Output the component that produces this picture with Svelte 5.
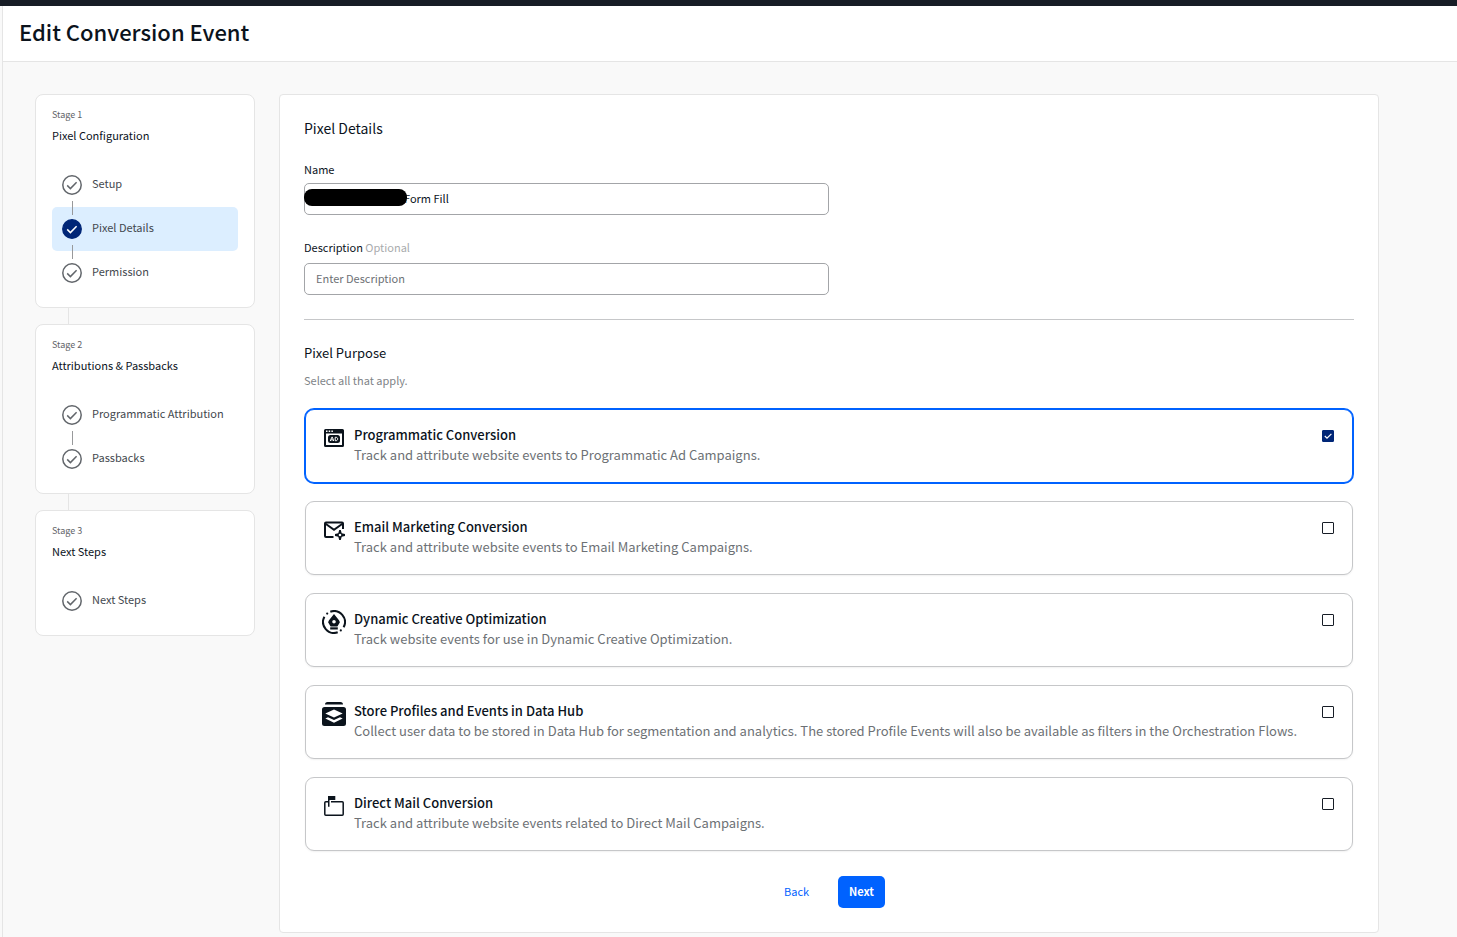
<script>
  const stages = [
    {
      label: 'Stage 1',
      title: 'Pixel Configuration',
      steps: ['Setup', 'Pixel Details', 'Permission']
    },
    {
      label: 'Stage 2',
      title: 'Attributions & Passbacks',
      steps: ['Programmatic Attribution', 'Passbacks']
    },
    {
      label: 'Stage 3',
      title: 'Next Steps',
      steps: ['Next Steps']
    }
  ];

  let currentStep = $state('Pixel Details');
  let name = $state('Form Fill');
  let description = $state('');

  let purposes = $state([
    {
      id: 'programmatic',
      title: 'Programmatic Conversion',
      text: 'Track and attribute website events to Programmatic Ad Campaigns.',
      checked: true
    },
    {
      id: 'email',
      title: 'Email Marketing Conversion',
      text: 'Track and attribute website events to Email Marketing Campaigns.',
      checked: false
    },
    {
      id: 'creative',
      title: 'Dynamic Creative Optimization',
      text: 'Track website events for use in Dynamic Creative Optimization.',
      checked: false
    },
    {
      id: 'datahub',
      title: 'Store Profiles and Events in Data Hub',
      text: 'Collect user data to be stored in Data Hub for segmentation and analytics. The stored Profile Events will also be available as filters in the Orchestration Flows.',
      checked: false
    },
    {
      id: 'mail',
      title: 'Direct Mail Conversion',
      text: 'Track and attribute website events related to Direct Mail Campaigns.',
      checked: false
    }
  ]);
</script>

<div class="app">
  <header class="page-header">
    <h1>Edit Conversion Event</h1>
  </header>

  <div class="layout">
    <!-- Stage navigation -->
    <nav class="stages" aria-label="Stages">
      {#each stages as stage}
        <section class="stage">
          <p class="stage-label">{stage.label}</p>
          <h2 class="stage-title">{stage.title}</h2>
          <ol class="steps">
            {#each stage.steps as step}
              <li>
                <button
                  type="button"
                  class="step"
                  class:active={step === currentStep}
                  onclick={() => (currentStep = step)}
                >
                  <svg class="step-icon" viewBox="0 0 20 20" width="20" height="20" aria-hidden="true">
                    <circle class="ring" cx="10" cy="10" r="9.2" />
                    <path class="tick" d="M5.2 10.4l3.200 3.200 6.200-6.400" />
                  </svg>
                  <span class="step-name">{step}</span>
                </button>
              </li>
            {/each}
          </ol>
        </section>
      {/each}
    </nav>

    <!-- Form -->
    <main class="panel">
      <h2 class="panel-title">Pixel Details</h2>

      <div class="field">
        <label for="pixel-name">Name</label>
        <div class="masked">
          <input id="pixel-name" class="masked-input" type="text" bind:value={name} />
          <span class="mask"></span>
        </div>
      </div>

      <div class="field">
        <label class="tall" for="pixel-description">Description <span class="optional">Optional</span></label>
        <input id="pixel-description" type="text" placeholder="Enter Description" bind:value={description} />
      </div>

      <hr />

      <h3 class="purpose-title">Pixel Purpose</h3>
      <p class="hint">Select all that apply.</p>

      <div class="purposes">
        {#each purposes as purpose}
          <label class="purpose" class:selected={purpose.checked}>
            <svg class="purpose-icon" viewBox="0 0 24 24" width="24" height="24" aria-hidden="true">
              {#if purpose.id === 'programmatic'}
                <path fill-rule="evenodd" d="M3.500 3h17A1.500 1.500 0 0 1 22 4.500v15a1.500 1.500 0 0 1-1.500 1.500h-17A1.500 1.500 0 0 1 2 19.500v-15A1.500 1.500 0 0 1 3.500 3zM4 7.500V19h16V7.500z" />
                <path class="light" d="M4 4.500h1.500v1.500H4zM6.700 4.500h1.500v1.500H6.700zM9.400 4.500h1.500v1.500H9.400z" />
                <rect x="6" y="9" width="12" height="8" rx="2.5" />
                <path class="light-line" d="M8.300 15l1.500-3.800h.6l1.300 3.800M9 13.900h2.200M13.200 11.300v3.400h.8c2.200 0 2.200-3.400 0-3.400z" />
              {:else if purpose.id === 'email'}
                <path class="line" d="M11.500 19H4a1 1 0 0 1-1-1V5.500a1 1 0 0 1 1-1h16a1 1 0 0 1 1 1V11" />
                <path class="line" d="M3.200 5.500l8.800 6.300 8.800-6.300" />
                <path fill-rule="evenodd" d="M17.200 12h1.600l.9 3.200 3.300.9v1.800l-3.300.9-.9 3.200h-1.600l-.9-3.200-3.300-.9v-1.800l3.300-.9zM18 15.700a1.300 1.300 0 1 0 0 2.600 1.300 1.300 0 0 0 0-2.600z" />
              {:else if purpose.id === 'creative'}
                <path class="line" d="M8.300 1.700A11 11 0 0 1 21.600 17.300M15.700 22.300A11 11 0 0 1 2.400 6.700" />
                <circle cx="5.200" cy="3.600" r="1.100" />
                <circle cx="18.800" cy="20.400" r="1.100" />
                <path fill-rule="evenodd" d="M12 4l5 6.300.9 2-2.500 4.200H8.600l-2.500-4.200.9-2zM12 10a1.800 1.800 0 1 0 0 3.600 1.800 1.800 0 0 0 0-3.600z" />
                <path d="M8.200 17.300h7.600v2.200H8.200z" />
              {:else if purpose.id === 'datahub'}
                <path d="M5.500 0h13a2.500 2.500 0 0 1 2.500 2.500H3A2.500 2.500 0 0 1 5.500 0z" />
                <path d="M2.500 5h19A2.500 2.500 0 0 1 24 7.500v14a2.500 2.500 0 0 1-2.500 2.500h-19A2.500 2.500 0 0 1 0 21.500v-14A2.500 2.500 0 0 1 2.500 5z" />
                <path class="light" d="M12 7.500l8.700 4-8.700 4-8.700-4zM3.300 16.500l2.700-1.200 6 2.800 6-2.800 2.700 1.200-8.700 4.200z" />
              {:else}
                <path class="thin-line" d="M6 7.800H3.800a1 1 0 0 0-1 1v11.400a1 1 0 0 0 1 1h16.400a1 1 0 0 0 1-1V8.800a1 1 0 0 0-1-1H9" />
                <path d="M6 2h7.300v4H7.500v6.800H6z" />
              {/if}
            </svg>
            <span class="purpose-body">
              <span class="purpose-name">{purpose.title}</span>
              <span class="purpose-text">{purpose.text}</span>
            </span>
            <span class="check">
              <input type="checkbox" bind:checked={purpose.checked} />
              {#if purpose.checked}
                <svg class="check-mark" viewBox="0 0 12 12" width="12" height="12" aria-hidden="true">
                  <path d="M2.800 6l2.200 2.200 4.400-4.400" />
                </svg>
              {/if}
            </span>
          </label>
        {/each}
      </div>

      <div class="actions">
        <button type="button" class="back">Back</button>
        <button type="button" class="next">Next</button>
      </div>
    </main>
  </div>
</div>

<style>
  :global(body) {
    margin: 0;
    background: #f9f9f9;
  }

  .app {
    box-sizing: border-box;
    min-height: 100vh;
    border-top: 6px solid #171d26;
    background: #f9f9f9;
    color: #0b131c;
    font-family: 'Source Sans Pro', 'Noto Sans CJK SC', sans-serif;
    font-size: 11px;
  }

  .app * {
    box-sizing: border-box;
  }

  h1, h2, h3, p, ol {
    margin: 0;
    padding: 0;
    font-weight: 400;
  }

  button, input {
    font: inherit;
    color: inherit;
  }

  .page-header {
    margin-left: 2px;
    padding: 9px 16px 14px;
    border-left: 1px solid #e5e5e5;
    border-bottom: 1px solid #e5e5e5;
    background: #fff;
  }

  h1 {
    font-size: 22px;
    line-height: 32px;
    font-weight: 500;
  }

  .layout {
    display: flex;
    align-items: flex-start;
    gap: 24px;
    margin-left: 2px;
    padding: 32px 32px 4px;
    border-left: 1px solid #e5e5e5;
  }

  /* Stages */
  .stages {
    display: flex;
    flex-direction: column;
    flex: 0 0 220px;
    gap: 16px;
  }

  .stage {
    position: relative;
    padding: 12px 16px;
    border: 1px solid #e5e5e5;
    border-radius: 8px;
    background: #fff;
  }

  .stage:not(:last-child)::after {
    content: '';
    position: absolute;
    top: 100%;
    left: 32px;
    width: 1px;
    height: 17px;
    background: #e5e5e5;
  }

  .stage-label {
    color: #5f6368;
    font-size: 9px;
    line-height: 16px;
  }

  .stage-title {
    font-size: 11px;
    line-height: 24px;
  }

  .steps {
    margin-top: 16px;
    list-style: none;
  }

  .steps li {
    position: relative;
  }

  .steps li:not(:last-child)::after {
    content: '';
    position: absolute;
    z-index: 1;
    bottom: -8px;
    left: 20px;
    width: 1px;
    height: 14px;
    background: #98999b;
  }

  .step {
    display: flex;
    align-items: center;
    gap: 10px;
    width: 100%;
    height: 44px;
    padding: 0 10px;
    border: 0;
    border-radius: 5px;
    background: none;
    color: #43484e;
    text-align: left;
    cursor: pointer;
  }

  .step.active {
    background: #dceeff;
  }

  .step-name {
    padding-bottom: 4px;
  }

  .step-icon {
    fill: none;
    stroke: #62666b;
    stroke-width: 1.5;
  }

  .active .ring {
    fill: #002677;
    stroke: #002677;
  }

  .active .tick {
    stroke: #fff;
  }

  /* Panel */
  .panel {
    flex: 1;
    min-width: 0;
    max-width: 1100px;
    padding: 23px 24px 24px;
    border: 1px solid #e5e5e5;
    border-radius: 4px;
    background: #fff;
  }

  .panel-title {
    margin-bottom: 22px;
    font-size: 14px;
    line-height: 20px;
  }

  .field {
    display: flex;
    flex-direction: column;
    gap: 5px;
    width: 50%;
    margin-bottom: 21px;
  }

  .field label {
    line-height: 18px;
  }

  .field label.tall {
    line-height: 22px;
  }

  .optional {
    color: #a9abad;
  }

  .field input {
    display: block;
    width: 100%;
    height: 32px;
    padding: 0 11px 2px;
    border: 1px solid #a3a5a8;
    border-radius: 5px;
    background: #fff;
  }

  .field input::placeholder {
    color: #6d7175;
    opacity: 1;
  }

  .masked {
    position: relative;
  }

  .field .masked-input {
    padding-left: 99px;
  }

  .mask {
    position: absolute;
    top: 6px;
    left: 0;
    width: 103px;
    height: 17px;
    border-radius: 8px;
    background: #000;
  }

  hr {
    height: 1px;
    margin: 24px 0 23px;
    border: 0;
    background: #c6c7c9;
  }

  .purpose-title {
    font-size: 13px;
    line-height: 20px;
  }

  .hint {
    margin: 8px 0 19px;
    color: #808387;
    line-height: 18px;
  }

  .purposes {
    display: flex;
    flex-direction: column;
    gap: 18px;
    padding: 1px;
  }

  .purpose {
    display: flex;
    align-items: flex-start;
    gap: 8px;
    padding: 15px 16px 17px;
    border: 1px solid #c6c7c9;
    border-radius: 9px;
    background: #fff;
    box-shadow: 0 1px 2px rgba(0, 0, 0, 0.06);
    cursor: pointer;
  }

  .purpose.selected {
    border-color: #0062ff;
    box-shadow: 0 0 0 1px #0062ff;
  }

  .purpose-icon {
    flex: none;
    margin-top: 1px;
    fill: #0b131c;
  }

  .light {
    fill: #fff;
  }

  .line, .thin-line, .light-line {
    fill: none;
    stroke: #0b131c;
    stroke-width: 2;
  }

  .thin-line {
    stroke-width: 1.5;
  }

  .light-line {
    stroke: #fff;
    stroke-width: 1;
  }

  .purpose-body {
    display: flex;
    flex-direction: column;
    flex: 1;
    min-width: 0;
    font-size: 13px;
    line-height: 20px;
  }

  .purpose-name {
    font-weight: 500;
  }

  .purpose-text {
    color: #6d7175;
  }

  .check {
    position: relative;
    flex: none;
    width: 12px;
    height: 12px;
    margin: 5px 2px;
  }

  .check input {
    display: block;
    appearance: none;
    width: 12px;
    height: 12px;
    margin: 0;
    border: 1px solid #171d26;
    border-radius: 1px;
    background: #fff;
  }

  .check input:checked {
    border-color: #002677;
    background: #002677;
  }

  .check-mark {
    position: absolute;
    inset: 0;
    fill: none;
    stroke: #fff;
    stroke-width: 1.2;
    pointer-events: none;
  }

  .actions {
    display: flex;
    justify-content: center;
    gap: 18px;
    margin-top: 24px;
  }

  .actions button {
    height: 32px;
    padding: 0 11px 2px;
    border: 0;
    border-radius: 5px;
    cursor: pointer;
  }

  .back {
    background: none;
    color: #0062ff;
  }

  .next {
    background: #0062ff;
    color: #fff;
    font-weight: 700;
  }
</style>
